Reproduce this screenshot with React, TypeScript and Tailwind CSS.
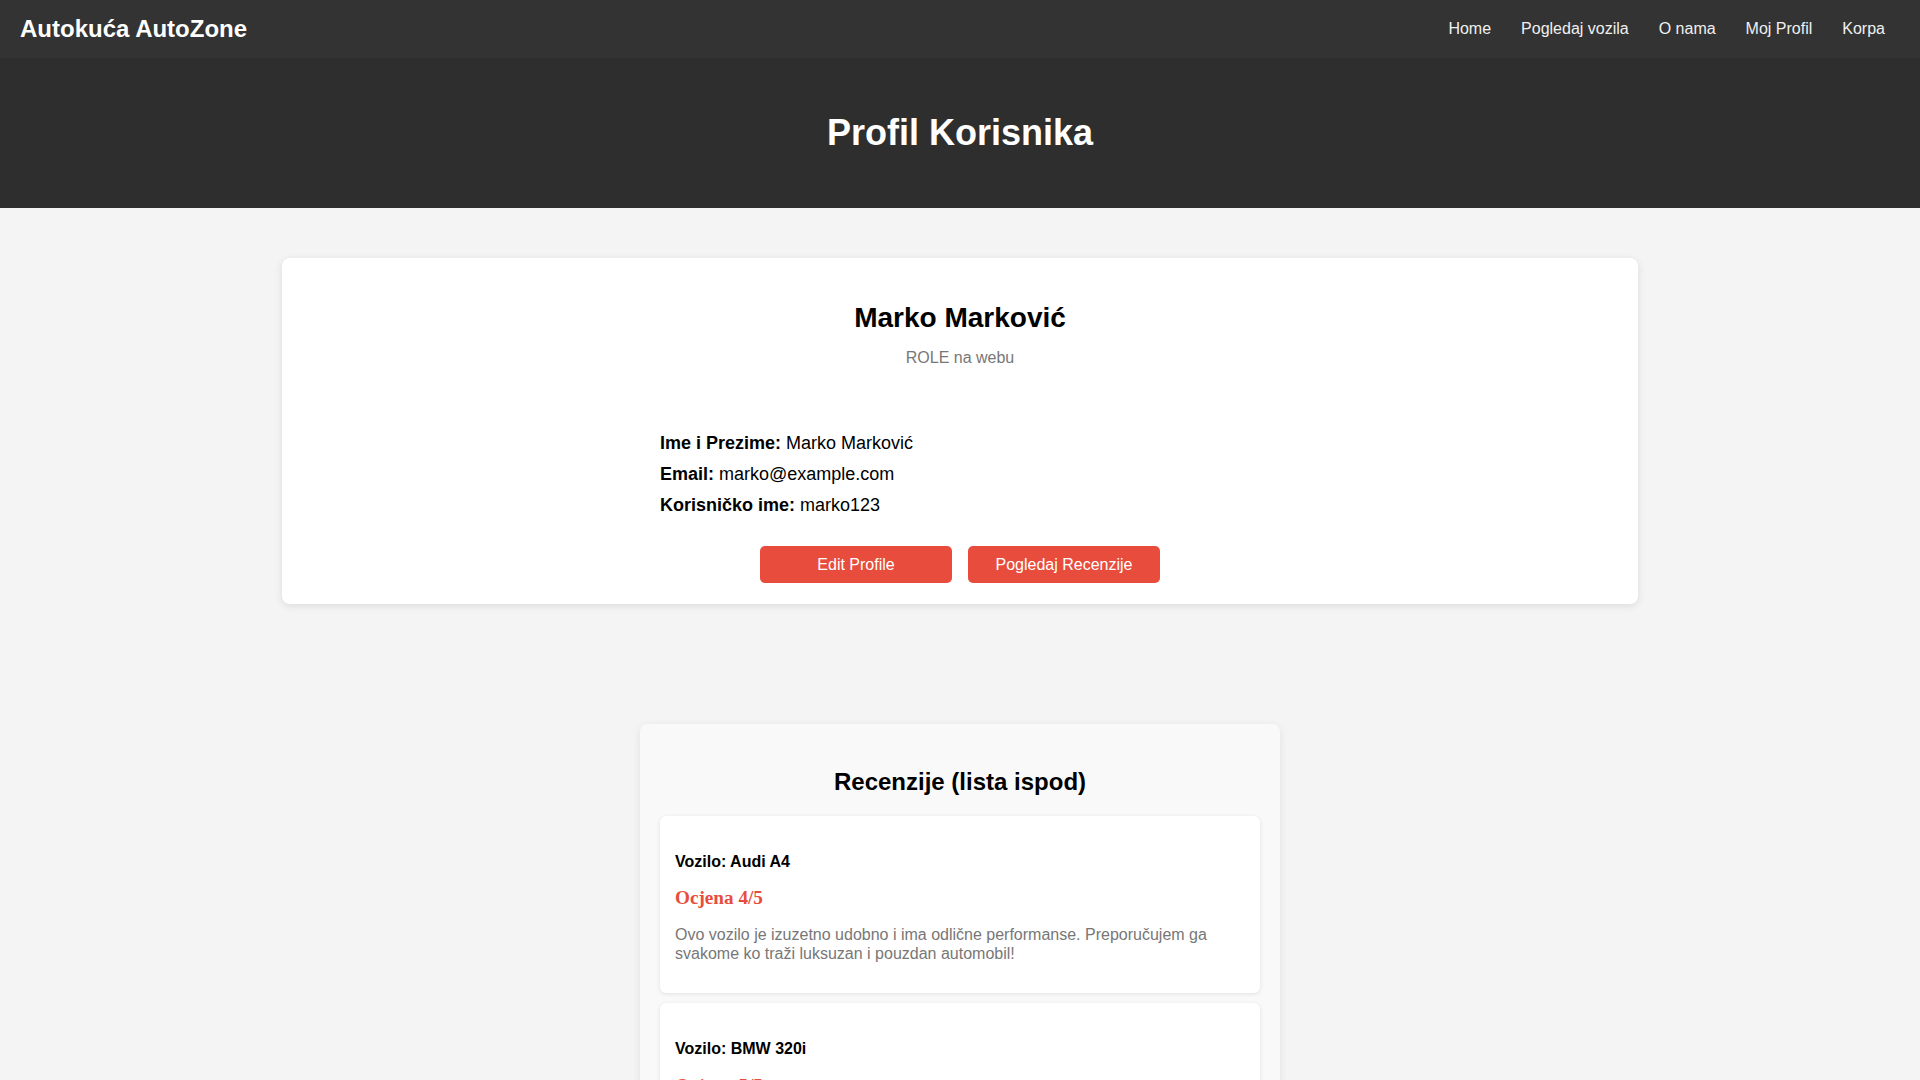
import React from "react";

const navLinks = ["Home", "Pogledaj vozila", "O nama", "Moj Profil", "Korpa"];

const reviews = [
  {
    car: "Audi A4",
    rating: 4,
    text: "Ovo vozilo je izuzetno udobno i ima odlične performanse. Preporučujem ga svakome ko traži luksuzan i pouzdan automobil!",
  },
  {
    car: "BMW 320i",
    rating: 5,
    text: "Sjajna vožnja i odlična potrošnja goriva. Kupovina je prošla bez ikakvih problema.",
  },
];

function Navbar() {
  return (
    <nav className="flex h-[58px] items-center justify-between bg-[#333333] pl-5 pr-5">
      <div className="text-[24px] font-bold leading-none text-white">Autokuća AutoZone</div>
      <div className="flex items-center">
        {navLinks.map((l) => (
          <a key={l} href="#" className="mx-[15px] text-[16px] text-[#f0f0f0]">
            {l}
          </a>
        ))}
      </div>
    </nav>
  );
}

function ReviewCard({ car, rating, text }: { car: string; rating: number; text: string }) {
  return (
    <div className="rounded-md bg-white px-[15px] pb-[30px] pt-[37px] shadow-[0_1px_4px_rgba(0,0,0,0.1)]">
      <div className="text-[16px] font-bold leading-[18.4px] text-black">Vozilo: {car}</div>
      <div className="mt-[16px] font-['Liberation_Serif',serif] text-[19.2px] font-bold leading-[22px] text-[#e74c3c]">
        Ocjena {rating}/5
      </div>
      <p className="mt-[17px] text-[16px] leading-[18.4px] text-[#777777]">{text}</p>
    </div>
  );
}

export default function App() {
  return (
    <div className="min-h-screen bg-[#f4f4f4] font-['Liberation_Sans',Arial,sans-serif]">
      <Navbar />

      <header className="flex h-[150px] items-center justify-center bg-[#2e2e2e]">
        <h1 className="text-[36px] font-bold leading-none text-white">Profil Korisnika</h1>
      </header>

      <main className="flex flex-col items-center pb-10">
        <section className="mt-[50px] w-[1356px] rounded-lg bg-white pb-[21px] pt-[44px] shadow-[0_2px_8px_rgba(0,0,0,0.1)]">
          <h2 className="text-center text-[28px] font-bold leading-[32px] text-black">Marko Marković</h2>
          <p className="mt-[15px] text-center text-[16px] leading-[18.4px] text-[#777777]">ROLE na webu</p>

          <div className="mx-auto mt-[61px] w-[600px] text-[18px] text-black">
            <p className="leading-[31px]">
              <span className="font-bold">Ime i Prezime:</span> Marko Marković
            </p>
            <p className="leading-[31px]">
              <span className="font-bold">Email:</span> marko@example.com
            </p>
            <p className="leading-[31px]">
              <span className="font-bold">Korisničko ime:</span> marko123
            </p>
          </div>

          <div className="mt-[25px] flex justify-center gap-4">
            <button className="h-[37px] w-[192px] rounded-[5px] bg-[#e74c3c] text-[16px] text-white">
              Edit Profile
            </button>
            <button className="h-[37px] w-[192px] rounded-[5px] bg-[#e74c3c] text-[16px] text-white">
              Pogledaj Recenzije
            </button>
          </div>
        </section>

        <section className="mt-[120px] w-[640px] rounded-lg bg-[#f9f9f9] px-5 pb-5 pt-[44px] shadow-[0_2px_8px_rgba(0,0,0,0.08)]">
          <h2 className="text-center text-[24px] font-bold leading-[27.6px] text-black">Recenzije (lista ispod)</h2>
          <div className="mt-5 flex flex-col gap-[10px]">
            {reviews.map((r) => (
              <ReviewCard key={r.car} {...r} />
            ))}
          </div>
        </section>
      </main>
    </div>
  );
}
